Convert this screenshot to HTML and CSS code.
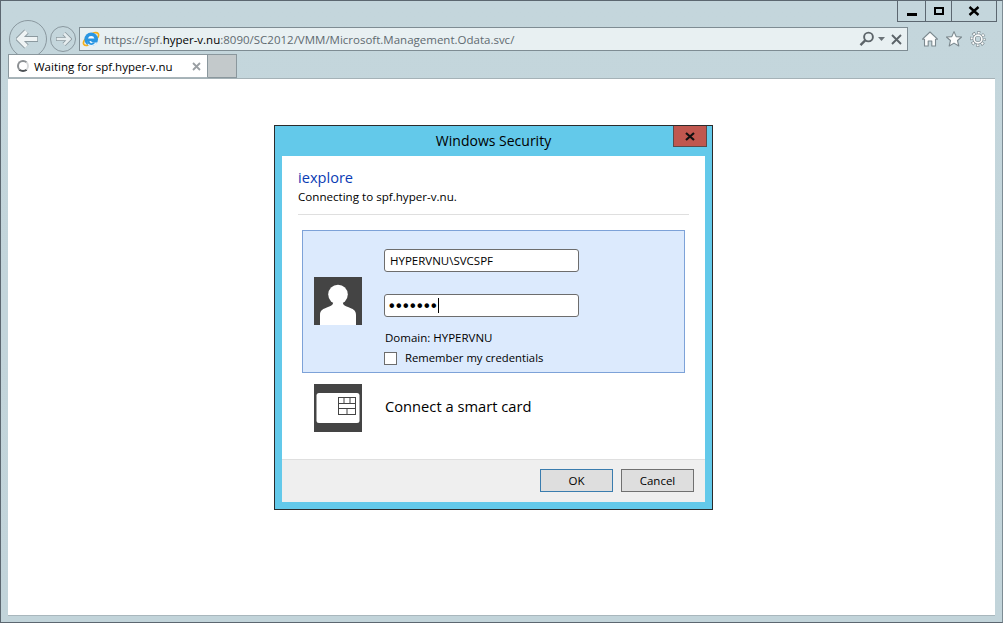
FILE: index.html
```html
<!DOCTYPE html>
<html>
<head>
  <title>Waiting for spf.hyper-v.nu</title>
  <link rel="stylesheet" href="styles.css">
</head>
<body>
  <div class="window">
    <div class="caption">
      <div class="win-btn win-min"><span class="min-bar"></span></div>
      <div class="win-btn win-max"><span class="max-box"></span></div>
      <div class="win-btn win-close">
        <svg width="12" height="10" viewBox="0 0 12 10"><path d="M1.5 1 L10.5 9 M10.5 1 L1.5 9" stroke="#000" stroke-width="2.4" fill="none"/></svg>
      </div>
    </div>

    <div class="nav">
      <div class="back">
        <svg width="24" height="20" viewBox="0 0 24 20" fill="none">
          <path d="M10.5 2.5 L3 10 L10.5 17.5 M3 10 H22" stroke="#8b999f" stroke-width="6"/>
          <path d="M10.5 2.5 L3 10 L10.5 17.5 M3 10 H21.3" stroke="#eef3f4" stroke-width="4"/>
        </svg>
      </div>
      <div class="forward">
        <svg width="17" height="14" viewBox="0 0 17 14" fill="none">
          <path d="M9 1.5 L14.5 7 L9 12.5 M14.5 7 H1" stroke="#8b999f" stroke-width="4.2"/>
          <path d="M9 1.5 L14.5 7 L9 12.5 M14.5 7 H1.6" stroke="#e6edef" stroke-width="2.6"/>
        </svg>
      </div>
      <div class="address">
        <svg class="ie-logo" width="18" height="18" viewBox="0 0 18 18">
          <ellipse cx="9" cy="9" rx="9" ry="4.2" transform="rotate(-38 9 9)" fill="none" stroke="#f3b01c" stroke-width="1.7"/>
          <circle cx="9.2" cy="9.3" r="6.8" fill="#2a96e2"/>
          <path d="M6 8.6 A3.3 3.3 0 0 1 12.4 8.6 Z" fill="#fff"/>
          <path d="M5.6 11 L9 11 A2.2 2.2 0 0 0 11 12.4 L15.4 12.4 A6.8 6.8 0 0 1 6 15.2 Z" fill="#e8f3fb"/>
          <path d="M5.2 10.8 C5 13 6.8 15 9.2 15 C11 15 12.3 14.2 13.2 12.6 L10.9 12.6 C10.4 13 9.9 13.2 9.3 13.2 C8.3 13.2 7.6 12 7.5 10.8 Z" fill="#2a96e2"/>
        </svg>
        <span class="url"><span class="url-dim">https://spf.</span><span class="url-host">hyper-v.nu</span><span class="url-dim">:8090/SC2012/VMM/Microsoft.Management.Odata.svc/</span></span>
        <svg class="addr-icon" width="16" height="16" viewBox="0 0 16 16"><circle cx="9.5" cy="6" r="4.4" fill="none" stroke="#5c6469" stroke-width="1.9"/><path d="M6.2 9.4 L1.5 14.2" stroke="#5c6469" stroke-width="2.4"/></svg>
        <svg class="addr-caret" width="7" height="4" viewBox="0 0 7 4"><path d="M0 0 H7 L3.5 4 Z" fill="#6b7378"/></svg>
        <svg class="addr-x" width="11" height="11" viewBox="0 0 11 11"><path d="M1 1 L10 10 M10 1 L1 10" stroke="#5c6469" stroke-width="1.9"/></svg>
      </div>
      <div class="tools">
        <svg width="16" height="16" viewBox="0 0 16 16"><path d="M8 1 L15.5 8.2 L13.5 8.2 L13.5 15 L9.8 15 L9.8 10 L6.2 10 L6.2 15 L2.5 15 L2.5 8.2 L0.5 8.2 Z" fill="#fbfcfc" stroke="#7c898f" stroke-width="1.1" stroke-linejoin="round"/></svg>
        <svg width="16" height="16" viewBox="0 0 16 16"><path d="M8 0.6 L10.2 5.6 L15.6 6 L11.5 9.5 L12.8 15 L8 12.1 L3.2 15 L4.5 9.5 L0.4 6 L5.8 5.6 Z" fill="#fbfcfc" stroke="#7c898f" stroke-width="1.1" stroke-linejoin="round"/></svg>
        <svg width="16" height="16" viewBox="0 0 16 16" fill="none">
          <circle cx="8" cy="8" r="6.2" stroke="#7c898f" stroke-width="3.4" stroke-dasharray="2.9 1.97" stroke-dashoffset="1.45"/>
          <circle cx="8" cy="8" r="6.2" stroke="#fbfcfc" stroke-width="2.2" stroke-dasharray="1.9 2.97" stroke-dashoffset="0.95"/>
          <circle cx="8" cy="8" r="3.9" stroke="#7c898f" stroke-width="3"/>
          <circle cx="8" cy="8" r="3.9" stroke="#fbfcfc" stroke-width="1.7"/>
        </svg>
      </div>
    </div>

    <div class="tabs">
      <div class="tab">
        <span class="spinner"></span>
        <span class="tab-title">Waiting for spf.hyper-v.nu</span>
        <svg class="tab-x" width="9" height="9" viewBox="0 0 9 9"><path d="M1 1 L8 8 M8 1 L1 8" stroke="#9a9fa3" stroke-width="1.8"/></svg>
      </div>
      <div class="new-tab"></div>
    </div>

    <div class="page">
      <div class="dialog">
        <div class="dialog-title">
          <span class="dialog-name">Windows Security</span>
          <div class="dialog-close">
            <svg width="10" height="9" viewBox="0 0 10 9"><path d="M1 1 L9 8 M9 1 L1 8" stroke="#111" stroke-width="2.2"/></svg>
          </div>
        </div>
        <div class="dialog-body">
          <div class="dialog-main">
            <div class="heading">iexplore</div>
            <div class="subheading">Connecting to spf.hyper-v.nu.</div>
            <div class="rule"></div>

            <div class="cred">
              <div class="tile tile-user">
                <svg width="48" height="48" viewBox="0 0 48 48"><circle cx="24" cy="17.5" r="9.8" fill="#fff"/><path d="M6 48 L6 38 C6 33 9 32 14 30 C18 28.5 19 27.5 19 26 L29 26 C29 27.5 30 28.5 34 30 C39 32 42 33 42 38 L42 48 Z" fill="#fff"/></svg>
              </div>
              <div class="cred-fields">
                <input class="field field-user" type="text" value="HYPERVNU\SVCSPF">
                <div class="field field-pass"><span class="dots">•••••••</span><span class="caret"></span></div>
                <div class="domain">Domain: HYPERVNU</div>
                <label class="remember"><span class="check"></span>Remember my credentials</label>
              </div>
            </div>

            <div class="smart">
              <div class="tile">
                <svg width="48" height="48" viewBox="0 0 48 48">
                  <rect x="2.5" y="9" width="43" height="30" rx="2.5" fill="#fff"/>
                  <rect x="24.5" y="13.5" width="17" height="17" fill="none" stroke="#444" stroke-width="1"/>
                  <path d="M30 13.5 V19 M36 13.5 V19 M24.5 19.5 H41.5 M24.5 24.5 H41.5 M33 24.5 V30.5" stroke="#444" stroke-width="1" fill="none"/>
                </svg>
              </div>
              <span class="smart-text">Connect a smart card</span>
            </div>
          </div>
          <div class="dialog-footer">
            <button class="btn btn-default">OK</button>
            <button class="btn">Cancel</button>
          </div>
        </div>
      </div>
    </div>
  </div>
</body>
</html>
```

FILE: styles.css
```css
* {
  box-sizing: border-box;
}

html,
body {
  margin: 0;
  height: 100%;
}

body {
  font-family: "Open Sans", "Noto Sans", sans-serif;
  color: #000;
  overflow: hidden;
}

.window {
  display: flex;
  flex-direction: column;
  height: 623px;
  background: linear-gradient(#c4d6dc, #c2d4da);
  border-top: 1px solid #5c6770;
  border-left: 1px solid #5c6770;
  border-bottom: 1px solid #5c6770;
  border-right: 1px solid #7d8c94;
}

/* window buttons */
.caption {
  display: flex;
  justify-content: flex-end;
  height: 21px;
  padding-right: 5px;
  flex: none;
}

.win-btn {
  display: flex;
  align-items: center;
  justify-content: center;
  height: 21px;
  border-left: 1px solid #5c6770;
  border-bottom: 1px solid #5c6770;
}

.win-min {
  width: 28px;
}

.win-max {
  width: 26px;
}

.win-close {
  width: 46px;
  border-right: 1px solid #5c6770;
}

.min-bar {
  width: 10px;
  height: 3px;
  margin-top: 7px;
  background: #000;
}

.max-box {
  width: 10px;
  height: 8px;
  border: 2px solid #000;
}

/* toolbar */
.nav {
  display: flex;
  align-items: center;
  height: 38px;
  margin-top: -2px;
  padding-left: 8px;
  flex: none;
}

.back {
  display: flex;
  align-items: center;
  justify-content: center;
  width: 38px;
  height: 38px;
  border: 1px solid #8a989f;
  border-radius: 50%;
}

.forward {
  display: flex;
  align-items: center;
  justify-content: center;
  width: 26px;
  height: 26px;
  margin-left: 3px;
  border: 1px solid #8a989f;
  border-radius: 50%;
}

.address {
  display: flex;
  align-items: center;
  width: 829px;
  height: 24px;
  margin-left: 3px;
  padding-left: 2px;
  background: #e8f0f2;
  border: 1px solid #7e8c93;
}

.ie-logo {
  flex: none;
}

.url {
  flex: 1;
  margin-left: 4px;
  font-size: 11.5px;
  white-space: nowrap;
}

.url-dim {
  color: #5f6a70;
}

.url-host {
  color: #000;
}

.addr-icon {
  flex: none;
}

.addr-caret {
  flex: none;
  margin-left: 3px;
}

.addr-x {
  flex: none;
  margin: 0 5px 0 6px;
}

.tools {
  display: flex;
  align-items: center;
  gap: 8px;
  margin-left: 14px;
}

/* tab strip */
.tabs {
  display: flex;
  height: 24px;
  margin-top: -4px;
  padding-left: 7px;
  flex: none;
}

.tab {
  display: flex;
  align-items: center;
  width: 200px;
  height: 24px;
  padding-left: 8px;
  background: #fff;
  border: 1px solid #8a979d;
  border-bottom-color: #a9b5ba;
}

.spinner {
  width: 12px;
  height: 12px;
  border: 2px solid #8b8f92;
  border-right-color: #d8dadb;
  border-bottom-color: #4d5256;
  border-radius: 50%;
  flex: none;
}

.tab-title {
  flex: 1;
  margin-left: 5px;
  font-size: 11.5px;
  white-space: nowrap;
}

.tab-x {
  flex: none;
  margin-right: 6px;
}

.new-tab {
  width: 29px;
  height: 24px;
  background: #c3c9cb;
  border: 1px solid #8a979d;
  border-left: none;
}

/* page area */
.page {
  flex: 1;
  margin: 0 7px 6px 7px;
  padding: 46px 0 0 266px;
  background: #fff;
  border-top: 1px solid #a5b2b7;
  border-bottom: 1px solid #a9b7bd;
}

.dialog {
  display: flex;
  flex-direction: column;
  width: 439px;
  height: 385px;
  background: #63c9ea;
  border: 1px solid #2b2b2b;
}

.dialog-title {
  position: relative;
  display: flex;
  align-items: center;
  justify-content: center;
  height: 30px;
  flex: none;
}

.dialog-name {
  margin-bottom: 2px;
  font-size: 14px;
}

.dialog-close {
  position: absolute;
  top: 0;
  right: 5px;
  display: flex;
  align-items: center;
  justify-content: center;
  width: 34px;
  height: 21px;
  background: #c0574f;
  border: 1px solid #5b4a4a;
  border-top: none;
}

.dialog-body {
  display: flex;
  flex-direction: column;
  flex: 1;
  margin: 0 7px 7px 7px;
  background: #fff;
}

.dialog-main {
  flex: 1;
  padding: 11px 16px 0 16px;
}

.heading {
  font-size: 14.6px;
  line-height: 21px;
  color: #0a3cb4;
}

.subheading {
  font-size: 11.6px;
  line-height: 18px;
}

.rule {
  height: 1px;
  margin-top: 8px;
  background: #dfdfdf;
}

.cred {
  display: flex;
  align-items: center;
  width: 383px;
  height: 143px;
  margin: 15px 0 0 4px;
  padding-left: 11px;
  background: #dceafd;
  border: 1px solid #7da2d8;
}

.tile {
  width: 48px;
  height: 48px;
  background: #444;
  flex: none;
}

.tile-user {
  margin-bottom: 1px;
}

.tile svg {
  display: block;
}

.cred-fields {
  display: flex;
  flex-direction: column;
  align-self: flex-start;
  margin: 18px 0 0 22px;
}

.field {
  display: flex;
  align-items: center;
  width: 195px;
  height: 23px;
  padding: 0 4px;
  font-family: inherit;
  font-size: 11.5px;
  color: #000;
  background: #fff;
  border: 1px solid #6d6d6d;
  border-radius: 3px;
  outline: none;
}

.field-user {
  padding: 0 5px;
}

.field-pass {
  margin-top: 22px;
}

.dots {
  font-family: "Liberation Sans", sans-serif;
  font-size: 16px;
  letter-spacing: 1.4px;
  font-weight: bold;
}

.caret {
  width: 1px;
  height: 15px;
  background: #000;
}

.domain {
  margin: 13px 0 0 1px;
  font-size: 11.5px;
  line-height: 16px;
}

.remember {
  display: flex;
  align-items: center;
  margin-top: 4px;
  font-size: 11.3px;
  line-height: 16px;
}

.check {
  width: 13px;
  height: 13px;
  margin-right: 8px;
  background: #fff;
  border: 1px solid #6d6d6d;
}

.smart {
  display: flex;
  align-items: center;
  margin: 11px 0 0 16px;
}

.smart-text {
  margin: 0 0 5px 23px;
  font-size: 14.7px;
}

.dialog-footer {
  display: flex;
  justify-content: flex-end;
  gap: 8px;
  height: 43px;
  padding: 9px 11px 0 0;
  background: #efefef;
  border-top: 1px solid #dfdfdf;
  flex: none;
}

.btn {
  width: 73px;
  height: 23px;
  padding: 0;
  font-family: inherit;
  font-size: 11.5px;
  color: #000;
  background: #dedede;
  border: 1px solid #707070;
}

.btn-default {
  border-color: #3a7cae;
}
```
